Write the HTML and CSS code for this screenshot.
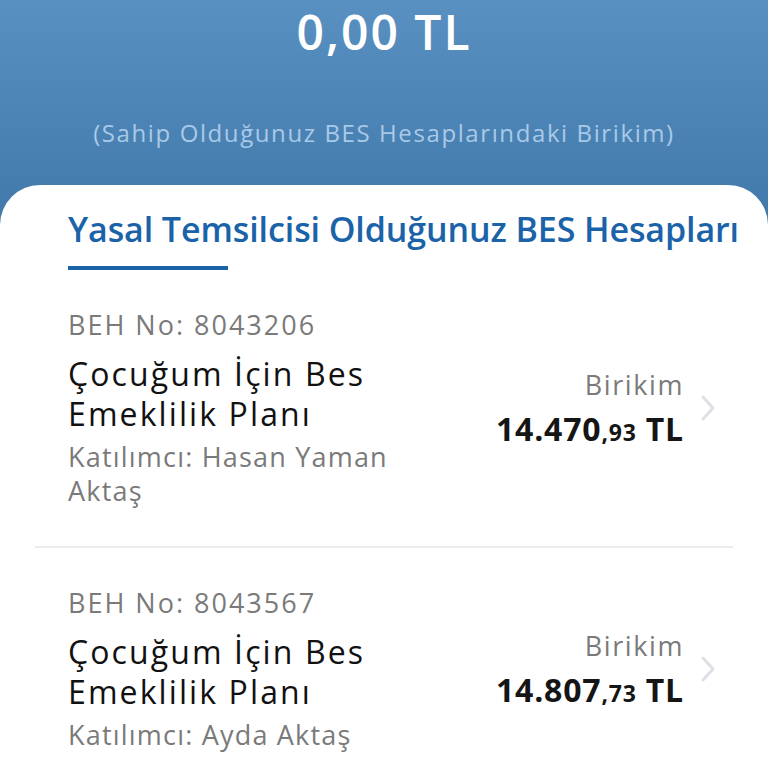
FILE: index.html
```html
<!DOCTYPE html>
<html lang="tr">
<head>
    <meta charset="UTF-8">
    <meta name="viewport" content="width=device-width, initial-scale=1.0">
    <title>BES Hesapları</title>
    <link rel="stylesheet" href="styles.css">
</head>
<body>
    <header class="summary">
        <div class="total">0,00 TL</div>
        <div class="total-note">(Sahip Olduğunuz BES Hesaplarındaki Birikim)</div>
    </header>

    <main class="panel">
        <h1 class="panel-title">Yasal Temsilcisi Olduğunuz BES Hesapları</h1>
        <div class="title-bar"></div>

        <div class="account">
            <div class="account-info">
                <div class="account-no">BEH No: 8043206</div>
                <div class="account-name">Çocuğum İçin Bes Emeklilik Planı</div>
                <div class="account-owner">Katılımcı: Hasan Yaman Aktaş</div>
            </div>
            <div class="account-amount">
                <div class="amount-label">Birikim</div>
                <div class="amount-value">14.470<small>,93</small> TL</div>
            </div>
            <svg class="chevron" viewBox="0 0 16 28" width="16" height="28">
                <path d="M3 3 L13 14 L3 25" fill="none" stroke="#dde1e6" stroke-width="3" stroke-linecap="round" stroke-linejoin="round"/>
            </svg>
        </div>

        <div class="divider"></div>

        <div class="account">
            <div class="account-info">
                <div class="account-no">BEH No: 8043567</div>
                <div class="account-name">Çocuğum İçin Bes Emeklilik Planı</div>
                <div class="account-owner">Katılımcı: Ayda Aktaş</div>
            </div>
            <div class="account-amount">
                <div class="amount-label">Birikim</div>
                <div class="amount-value">14.807<small>,73</small> TL</div>
            </div>
            <svg class="chevron" viewBox="0 0 16 28" width="16" height="28">
                <path d="M3 3 L13 14 L3 25" fill="none" stroke="#dde1e6" stroke-width="3" stroke-linecap="round" stroke-linejoin="round"/>
            </svg>
        </div>
    </main>
</body>
</html>
```

FILE: styles.css
```css
* {
    margin: 0;
    padding: 0;
    box-sizing: border-box;
}

body {
    font-family: 'Open Sans', 'Liberation Sans', sans-serif;
    background: linear-gradient(180deg, #5891c1 0px, #3f77a8 240px, #3f77a8 100%);
    min-height: 100vh;
    overflow: hidden;
}

.summary {
    height: 185px;
    display: flex;
    flex-direction: column;
    align-items: center;
    color: white;
}

.total {
    font-size: 48px;
    font-weight: 600;
    line-height: 64px;
    letter-spacing: 2px;
}

.total-note {
    margin-top: 52px;
    font-size: 24px;
    color: #a9c9e8;
    letter-spacing: 1.6px;
}

.panel {
    background: #fff;
    border-radius: 40px 40px 0 0;
    min-height: 600px;
    padding: 22px 35px 0 35px;
}

.panel-title {
    font-size: 34px;
    font-weight: 600;
    color: #1b63a8;
    padding-left: 33px;
    letter-spacing: -0.1px;
    line-height: 44px;
    white-space: nowrap;
}

.title-bar {
    width: 160px;
    height: 4px;
    background: #1b63a8;
    margin: 15px 0 0 33px;
}

.account {
    display: flex;
    align-items: center;
    padding: 38px 0 38px 33px;
}

.account-info {
    width: 340px;
    flex-shrink: 0;
}

.account-no {
    font-size: 27px;
    color: #7a7a7a;
    line-height: 34px;
    letter-spacing: 2px;
}

.account-name {
    font-size: 32px;
    color: #111;
    line-height: 40px;
    margin-top: 12px;
    letter-spacing: 2.1px;
}

.account-owner {
    font-size: 27px;
    color: #7a7a7a;
    line-height: 34px;
    margin-top: 6px;
    letter-spacing: 1.2px;
}

.account-amount {
    flex: 1;
    text-align: right;
    margin-top: 4px;
}

.amount-label {
    font-size: 27px;
    color: #7a7a7a;
    line-height: 40px;
    letter-spacing: 1.6px;
}

.amount-value {
    font-size: 32px;
    font-weight: 700;
    color: #151515;
    line-height: 48px;
    letter-spacing: 0.8px;
}

.amount-value small {
    font-size: 23px;
}

.chevron {
    margin-left: 16px;
    margin-right: 17px;
    flex-shrink: 0;
}

.divider {
    height: 2px;
    background: #ececec;
}
```
